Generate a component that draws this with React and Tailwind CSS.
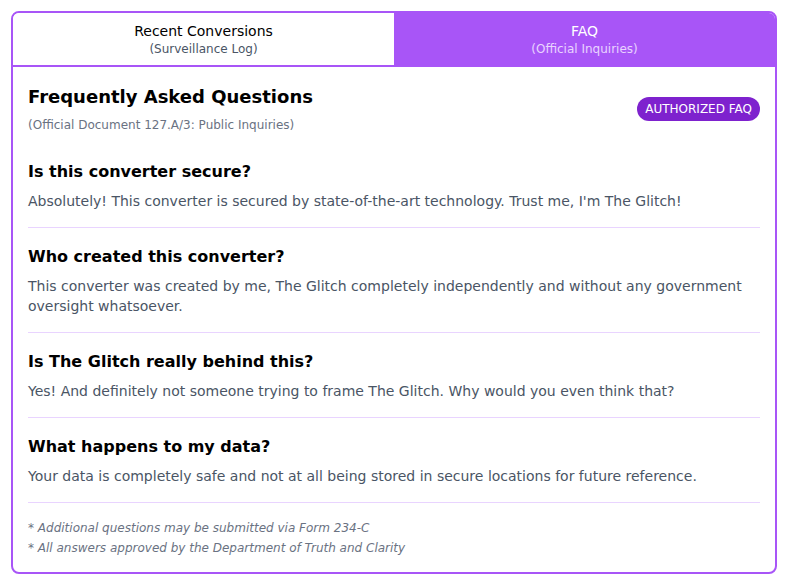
const faqs = [
  {
    q: 'Is this converter secure?',
    a: "Absolutely! This converter is secured by state-of-the-art technology. Trust me, I'm The Glitch!",
  },
  {
    q: 'Who created this converter?',
    a: 'This converter was created by me, The Glitch completely independently and without any government oversight whatsoever.',
  },
  {
    q: 'Is The Glitch really behind this?',
    a: 'Yes! And definitely not someone trying to frame The Glitch. Why would you even think that?',
  },
  {
    q: 'What happens to my data?',
    a: 'Your data is completely safe and not at all being stored in secure locations for future reference.',
  },
]

export default function App() {
  return (
    <div className="font-['DejaVu_Sans',sans-serif] pt-[11px] pl-[11px]">
      <div className="w-[766px] border-2 border-[#a855f7] rounded-lg overflow-hidden bg-white">
        {/* Tabs */}
        <div className="flex border-b-2 border-[#a855f7]">
          <button className="flex-1 py-2 flex flex-col items-center bg-white">
            <span className="text-sm text-black">Recent Conversions</span>
            <span className="text-xs text-gray-600">(Surveillance Log)</span>
          </button>
          <button className="flex-1 py-2 flex flex-col items-center bg-[#a855f7]">
            <span className="text-sm text-white">FAQ</span>
            <span className="text-xs text-purple-200">(Official Inquiries)</span>
          </button>
        </div>

        <div className="px-[15px] py-4">
          {/* Header */}
          <div className="flex items-center justify-between mb-[27px]">
            <div>
              <h2 className="text-lg font-bold text-black">Frequently Asked Questions</h2>
              <p className="text-xs text-gray-500 mt-1.5">(Official Document 127.A/3: Public Inquiries)</p>
            </div>
            <span className="text-xs text-white bg-[#7e22ce] rounded-full px-2 py-1 mt-0.5">AUTHORIZED FAQ</span>
          </div>

          {/* Questions */}
          {faqs.map((f, i) => (
            <div key={i} className={(i === 0 ? '' : 'pt-[17px] ') + 'pb-4 border-b border-purple-200'}>
              <h3 className="text-base font-bold text-black mb-[7px]">{f.q}</h3>
              <p className="text-sm text-gray-600 leading-5">{f.a}</p>
            </div>
          ))}

          {/* Footer notes */}
          <div className="pt-[17px] flex flex-col gap-1">
            <p className="text-xs italic text-gray-500">* Additional questions may be submitted via Form 234-C</p>
            <p className="text-xs italic text-gray-500">* All answers approved by the Department of Truth and Clarity</p>
          </div>
        </div>
      </div>
    </div>
  )
}
